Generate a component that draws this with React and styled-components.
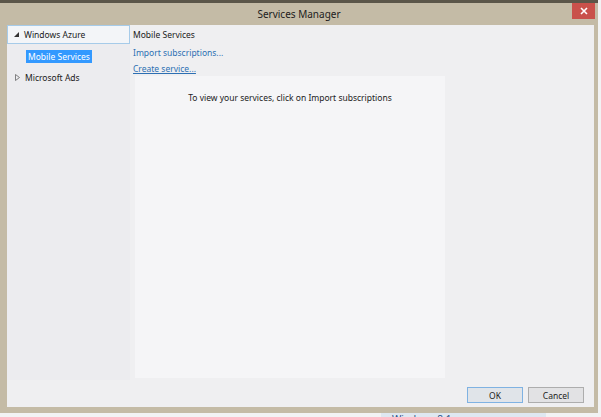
import styled, { createGlobalStyle } from "styled-components";

const Global = createGlobalStyle`
  html, body { margin: 0; padding: 0; }
  body { background: #eef0f2; font-family: "Noto Sans", "Open Sans", sans-serif; }
`;

const Screen = styled.div`
  width: 601px;
  height: 417px;
  overflow: hidden;
  background: #f2f3f4;
  display: flex;
  flex-direction: column;
`;

const Window = styled.div`
  width: 598px;
  height: 413px;
  box-sizing: border-box;
  background: #c4bba6;
  border-top: 3px solid #5b5649;
  display: flex;
  flex-direction: column;
  flex-shrink: 0;
`;

const TitleBar = styled.div`
  height: 22px;
  display: flex;
  align-items: center;
  justify-content: center;
  position: relative;
  font-size: 10px;
  color: #1c1c1c;
`;

const CloseButton = styled.div`
  position: absolute;
  right: 3px;
  top: 0;
  width: 23px;
  height: 16px;
  background: #c9514b;
  color: #fff;
  display: flex;
  align-items: center;
  justify-content: center;
`;

const Body = styled.div`
  flex: 1;
  margin: 0 4px 6px 7px;
  background: #efeff1;
  display: flex;
  flex-direction: column;
`;

const Main = styled.div`
  display: flex;
  height: 355px;
`;

const Tree = styled.div`
  width: 123px;
  background: #ececef;
  display: flex;
  flex-direction: column;
  font-size: 8.5px;
  color: #1a1a1a;
`;

const TreeRow = styled.div`
  height: ${p => p.$h || 19}px;
  box-sizing: border-box;
  display: flex;
  align-items: center;
  padding-left: ${p => p.$indent}px;
  border: 1px solid ${p => (p.$focused ? "#a6cbe9" : "transparent")};
  background: ${p => (p.$focused ? "#f3f5f8" : "transparent")};
`;

const Arrow = styled.span`
  width: 10px;
  display: inline-flex;
  align-items: center;
  color: #404040;
`;

const Selected = styled.span`
  background: #3399ff;
  color: #fff;
  padding: 1px 2px;
  line-height: 11px;
`;

const Right = styled.div`
  flex: 1;
  display: flex;
  flex-direction: column;
  padding-left: 3px;
  font-size: 8.5px;
`;

const Heading = styled.div`
  height: 19px;
  display: flex;
  align-items: center;
  color: #1a1a1a;
`;

const Link = styled.a`
  height: 16px;
  display: flex;
  align-items: center;
  color: #2d6fb3;
  text-decoration: ${p => (p.$underline ? "underline" : "none")};
`;

const Panel = styled.div`
  margin-left: 2px;
  width: 310px;
  flex: 1;
  margin-bottom: 2px;
  background: #f5f5f7;
  display: flex;
  justify-content: center;
  padding-top: 16px;
  color: #222;
`;

const Footer = styled.div`
  flex: 1;
  display: flex;
  justify-content: flex-end;
  align-items: center;
  gap: 5px;
  padding-right: 10px;
  padding-top: 3px;
`;

const Button = styled.button`
  width: 56px;
  height: 16px;
  padding: 0;
  font-family: inherit;
  font-size: 8.5px;
  color: #1a1a1a;
  background: ${p => (p.$primary ? "#e0e4e9" : "#e2e2e4")};
  border: 1px solid ${p => (p.$primary ? "#7fb2e2" : "#adadad")};
`;

const Desktop = styled.div`
  margin-left: 381px;
  width: 165px;
  height: 12px;
  background: #dfe8f1;
  font-size: 10px;
  color: #2a4f86;
  padding-left: 11px;
  box-sizing: border-box;
  line-height: 12px;
`;

export default function App() {
  return (
    <Screen>
      <Global />
      <Window>
        <TitleBar>
          Services Manager
          <CloseButton>
            <svg width="8" height="8" viewBox="0 0 8 8">
              <path d="M1 1L7 7M7 1L1 7" stroke="#fff" strokeWidth="1.6" />
            </svg>
          </CloseButton>
        </TitleBar>
        <Body>
          <Main>
            <Tree>
              <TreeRow $focused $indent={6}>
                <Arrow>
                  <svg width="5" height="5" viewBox="0 0 5 5">
                    <path d="M5 0L5 5L0 5Z" fill="#333" />
                  </svg>
                </Arrow>
                Windows Azure
              </TreeRow>
              <TreeRow $indent={18} $h={25}>
                <Selected>Mobile Services</Selected>
              </TreeRow>
              <TreeRow $indent={7} $h={17}>
                <Arrow>
                  <svg width="5" height="7" viewBox="0 0 5 7">
                    <path d="M0.5 0.5L4.5 3.5L0.5 6.5Z" fill="none" stroke="#666" strokeWidth="0.8" />
                  </svg>
                </Arrow>
                Microsoft Ads
              </TreeRow>
            </Tree>
            <Right>
              <Heading>Mobile Services</Heading>
              <Link>Import subscriptions...</Link>
              <Link $underline>Create service...</Link>
              <Panel>To view your services, click on Import subscriptions</Panel>
            </Right>
          </Main>
          <Footer>
            <Button $primary>OK</Button>
            <Button>Cancel</Button>
          </Footer>
        </Body>
      </Window>
      <Desktop>Windows 8.1</Desktop>
    </Screen>
  );
}
